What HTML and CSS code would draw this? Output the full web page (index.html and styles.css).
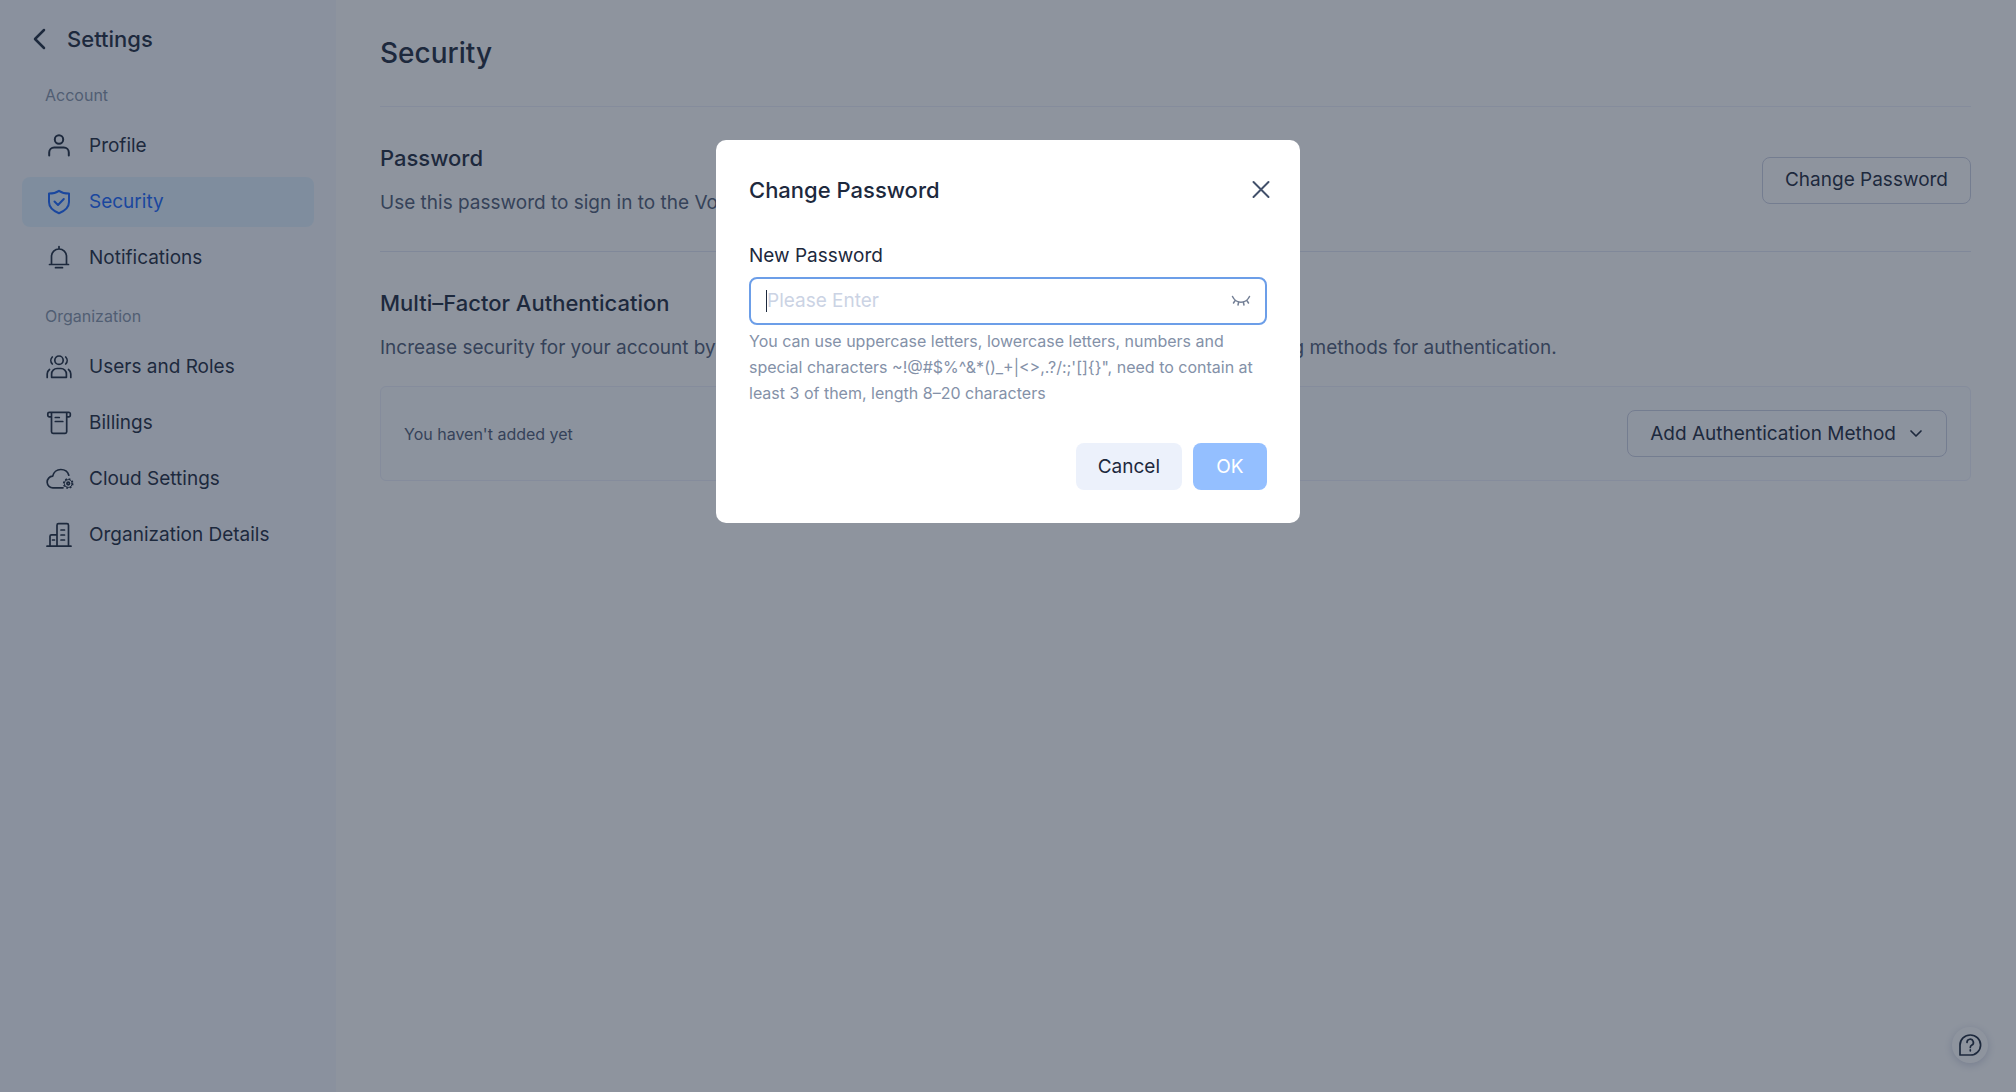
FILE: index.html
```html
<!DOCTYPE html>
<html lang="en">
<head>
<meta charset="utf-8">
<title>Security</title>
<link rel="stylesheet" href="styles.css">
</head>
<body>

<div class="page">
  <nav class="sidebar">
    <a class="back" href="#">
      <svg width="24" height="24" viewBox="0 0 24 24"><path d="M16 3 L7 12 L16 21"/></svg>
      <span>Settings</span>
    </a>

    <h2 class="group">Account</h2>
    <ul class="menu">
      <li><a class="item" href="#">
        <svg class="heavy" width="26" height="26" viewBox="0 0 26 26"><circle cx="13" cy="6.5" r="4.2"/><path d="M3.2 22.5v-3a5 5 0 0 1 5-5h9.600a5 5 0 0 1 5 5v3"/></svg>
        Profile</a></li>
      <li><a class="item selected" href="#">
        <svg class="heavy" width="26" height="26" viewBox="0 0 26 26"><path d="M13 1.800c3 2 6.500 2.700 10 2.700v8.500c0 5-4 8.800-10 11.200C7 21.800 3 18 3 13V4.500c3.500 0 7-.7 10-2.700z"/><path d="M8.500 12.500l3.500 3.500 5.800-6"/></svg>
        Security</a></li>
      <li><a class="item" href="#">
        <svg width="26" height="26" viewBox="0 0 26 26"><path d="M13 1.500v2.500M5.500 19.300V11.500a7.500 7.500 0 0 1 15 0v7.800M3.500 19.500h19M9.500 22.700h7"/></svg>
        Notifications</a></li>
    </ul>

    <h2 class="group">Organization</h2>
    <ul class="menu">
      <li><a class="item" href="#">
        <svg width="26" height="26" viewBox="0 0 26 26"><circle cx="13" cy="6.200" r="4.200"/><path d="M5.600 23.300v-3.300a5.500 5.500 0 0 1 5.500-5.500h3.800a5.500 5.500 0 0 1 5.500 5.500v3.300zM6.300 3a5 5 0 0 0 0 7M19.700 3a5 5 0 0 1 0 7M1.200 23.500v-3.500c0-2 .9-3.500 2.300-4.500M24.800 23.500v-3.500c0-2-.9-3.500-2.300-4.500"/></svg>
        Users and Roles</a></li>
      <li><a class="item" href="#">
        <svg width="26" height="26" viewBox="0 0 26 26"><path d="M5.500 6.800H3.300A1.500 1.500 0 0 1 1.800 5.300V3.800a1.500 1.500 0 0 1 1.500-1.500h19.500a1.500 1.500 0 0 1 1.500 1.500v1.500a1.500 1.500 0 0 1-1.500 1.500H20.700M5.500 2.500v19.300a1.500 1.500 0 0 0 1.500 1.500h12.200a1.500 1.500 0 0 0 1.500-1.500V2.500M9.300 7.500h4M9.300 11.500h7.500"/></svg>
        Billings</a></li>
      <li><a class="item" href="#">
        <svg width="28" height="26" viewBox="0 0 28 26"><path d="M17 21.800H7.200a5.800 5.800 0 0 1-.5-11.600C7.500 6.200 10.800 3.500 14.800 3.500c3.800 0 7 2.400 8 5.700"/><circle class="cog" cx="22.200" cy="17.500" r="4.600"/><circle class="thin" cx="22.200" cy="17.500" r="3.900"/><circle cx="22.200" cy="17.500" r="1.300"/></svg>
        Cloud Settings</a></li>
      <li><a class="item" href="#">
        <svg width="26" height="26" viewBox="0 0 26 26"><path d="M1 24.200h24M11 24V3.200a1.500 1.500 0 0 1 1.500-1.500H21a1.500 1.500 0 0 1 1.500 1.500V24M11 12.800H5.500A1.500 1.500 0 0 0 4 14.300V24M15 8h3.500M15 13h3.500M15 18h3.500M6.500 18h2"/></svg>
        Organization Details</a></li>
    </ul>
  </nav>

  <main class="main">
    <h1>Security</h1>

    <section class="section row">
      <div>
        <h3>Password</h3>
        <p class="desc">Use this password to sign in to the Volcano Engine console</p>
      </div>
      <button class="btn outline" type="button">Change Password</button>
    </section>

    <section class="section">
      <h3>Multi–Factor Authentication</h3>
      <p class="desc">Increase security for your account by enabling multi-factor authentication. Choose one of the following methods for authentication.</p>
      <div class="card row">
        <span>You haven't added yet</span>
        <button class="btn outline" type="button">Add Authentication Method
          <svg width="16" height="16" viewBox="0 0 16 16"><path d="M3 5l5 5 5-5"/></svg>
        </button>
      </div>
    </section>
  </main>
</div>

<button class="help" type="button" aria-label="Help">
  <svg width="24" height="24" viewBox="0 0 24 24"><path d="M2 22V12A10.300 10 0 1 1 12.300 22z"/><path d="M9 9.500a3.200 3.200 0 1 1 4.600 2.800c-.9.500-1.300 1-1.300 2.200M12.300 16.800v1"/></svg>
</button>

<div class="mask">
  <form class="modal" role="dialog" aria-labelledby="modalTitle">
    <div class="modalHead">
      <h2 id="modalTitle">Change Password</h2>
      <button class="close" type="button" aria-label="Close">
        <svg width="20" height="20" viewBox="0 0 20 20"><path d="M2.500 2l15 15M17.500 2l-15 15"/></svg>
      </button>
    </div>
    <label class="label" for="newPassword">New Password</label>
    <div class="field">
      <input id="newPassword" type="password" placeholder="Please Enter" aria-describedby="hint" autofocus>
      <button class="eye" type="button" aria-label="Show password">
        <svg width="20" height="20" viewBox="0 0 20 20"><path d="M1.500 5.500c1.800 3.800 4.700 5.700 8.500 5.700s6.700-1.900 8.500-5.700M4.200 9.300L2.500 12M7.700 11l-.7 3M12.300 11l.7 3M15.800 9.300l1.700 2.700"/></svg>
      </button>
    </div>
    <p class="hint" id="hint">You can use uppercase letters, lowercase letters, numbers and special characters ~!@#$%^&amp;*()_+|&lt;&gt;,.?/:;'[]{}", need to contain at least 3 of them, length 8–20 characters</p>
    <div class="actions">
      <button class="btn cancel" type="button">Cancel</button>
      <button class="btn ok" type="submit" disabled>OK</button>
    </div>
  </form>
</div>

</body>
</html>
```
FILE: styles.css
```css
* { box-sizing: border-box; }

body {
  margin: 0;
  font: 19px/28px Inter, "Liberation Sans", sans-serif;
  color: #1d293d;
  background: #fff;
}

h1, h2, h3, p, ul { margin: 0; padding: 0; }
h1, h2, h3 { font-weight: 500; }
ul { list-style: none; }
a { color: inherit; text-decoration: none; }
button, input { font: inherit; color: inherit; }
button { padding: 0; border: 0; background: none; cursor: pointer; }

svg {
  display: block;
  flex: none;
  fill: none;
  stroke: currentColor;
  stroke-width: 1.7;
  stroke-linecap: round;
  stroke-linejoin: round;
}
svg.heavy { stroke-width: 2; }
.thin { stroke-width: 1; }
.cog { stroke-width: 1.5; stroke-dasharray: 1.8; stroke-linecap: butt; }

.page { display: flex; min-height: 100vh; }

/* sidebar */
.sidebar {
  flex: none;
  width: 336px;
  padding: 24px 22px;
  background: #f6f9ff;
}
.back {
  display: flex;
  align-items: center;
  gap: 15px;
  margin: 0 0 30px 6px;
  font-size: 22px;
  line-height: 30px;
  font-weight: 500;
}
.back svg { stroke-width: 2.5; }
.group {
  margin: 0 23px 15px;
  font-size: 16px;
  line-height: 22px;
  font-weight: 400;
  color: #8592a8;
}
.menu { display: grid; gap: 6px; margin-bottom: 22px; }
.item {
  display: grid;
  grid-template-columns: 26px 1fr;
  align-items: center;
  gap: 17px;
  height: 50px;
  padding: 0 24px;
  border-radius: 8px;
}
.selected { background: #e1f1ff; color: #1664ff; }

/* content */
.main { flex: 1; min-width: 0; padding: 0 45px 40px 44px; }
.main h1 {
  padding: 35px 0;
  font-size: 28px;
  line-height: 36px;
  border-bottom: 1px solid #eceffa;
}
.section { padding: 36px 0 34px; border-bottom: 1px solid #e2e6f4; }
.section:last-child { border-bottom: 0; }
.section h3 { margin-bottom: 16px; font-size: 22px; line-height: 30px; }
.desc { color: #4e5b75; }
.row { display: flex; align-items: center; justify-content: space-between; }
.card {
  margin-top: 24px;
  padding: 23px;
  border: 1px solid #eceffa;
  border-radius: 6px;
  background: #fbfcff;
  font-size: 16px;
  color: #4e5b75;
}

.btn {
  display: inline-flex;
  align-items: center;
  justify-content: center;
  gap: 12px;
  min-width: 74px;
  height: 47px;
  padding: 0 22px;
  border-radius: 8px;
  font-size: 19px;
  color: #1d293d;
}
.outline { border: 1px solid #cbd0e2; }

.help {
  position: fixed;
  right: 28px;
  bottom: 29px;
  display: grid;
  place-items: center;
  width: 36px;
  height: 36px;
  border-radius: 50%;
  background: #fff;
  box-shadow: 0 2px 8px rgba(60, 70, 130, .25);
}

/* dialog */
.mask {
  position: fixed;
  inset: 0;
  padding-top: 140px;
  background: rgba(29, 41, 61, .5);
}
.modal {
  width: 584px;
  max-width: 100%;
  margin: 0 auto;
  padding: 32px 33px 33px;
  border-radius: 10px;
  background: #fff;
}
.modalHead {
  display: flex;
  align-items: center;
  justify-content: space-between;
  margin-bottom: 34px;
}
.modalHead h2 { font-size: 22px; line-height: 36px; }
.close { margin-right: -4px; color: #42506a; }
.close svg { stroke-width: 2; }
.label { display: block; margin-bottom: 7px; }
.field {
  display: flex;
  align-items: center;
  height: 48px;
  padding: 0 14px 0 15px;
  border: 2px solid #6c9ee8;
  border-radius: 8px;
}
/* steady caret, shown until something is typed */
.field:has(input:placeholder-shown)::before {
  content: "";
  width: 1px;
  height: 22px;
  background: #1d293d;
}
.field input {
  flex: 1;
  min-width: 0;
  padding: 0;
  border: 0;
  outline: 0;
  background: none;
}
.field input:placeholder-shown { caret-color: transparent; }
.field input::placeholder { color: #cbd3e4; }
.eye { color: #737f95; }
.eye svg { stroke-width: 1.5; }
.hint {
  margin: 3px 0 37px;
  font-size: 16px;
  line-height: 26px;
  color: #8491a8;
}
.actions { display: flex; justify-content: flex-end; gap: 11px; }
.cancel { background: #ecf1fb; }
.ok { background: #94bfff; color: #fff; }
```
